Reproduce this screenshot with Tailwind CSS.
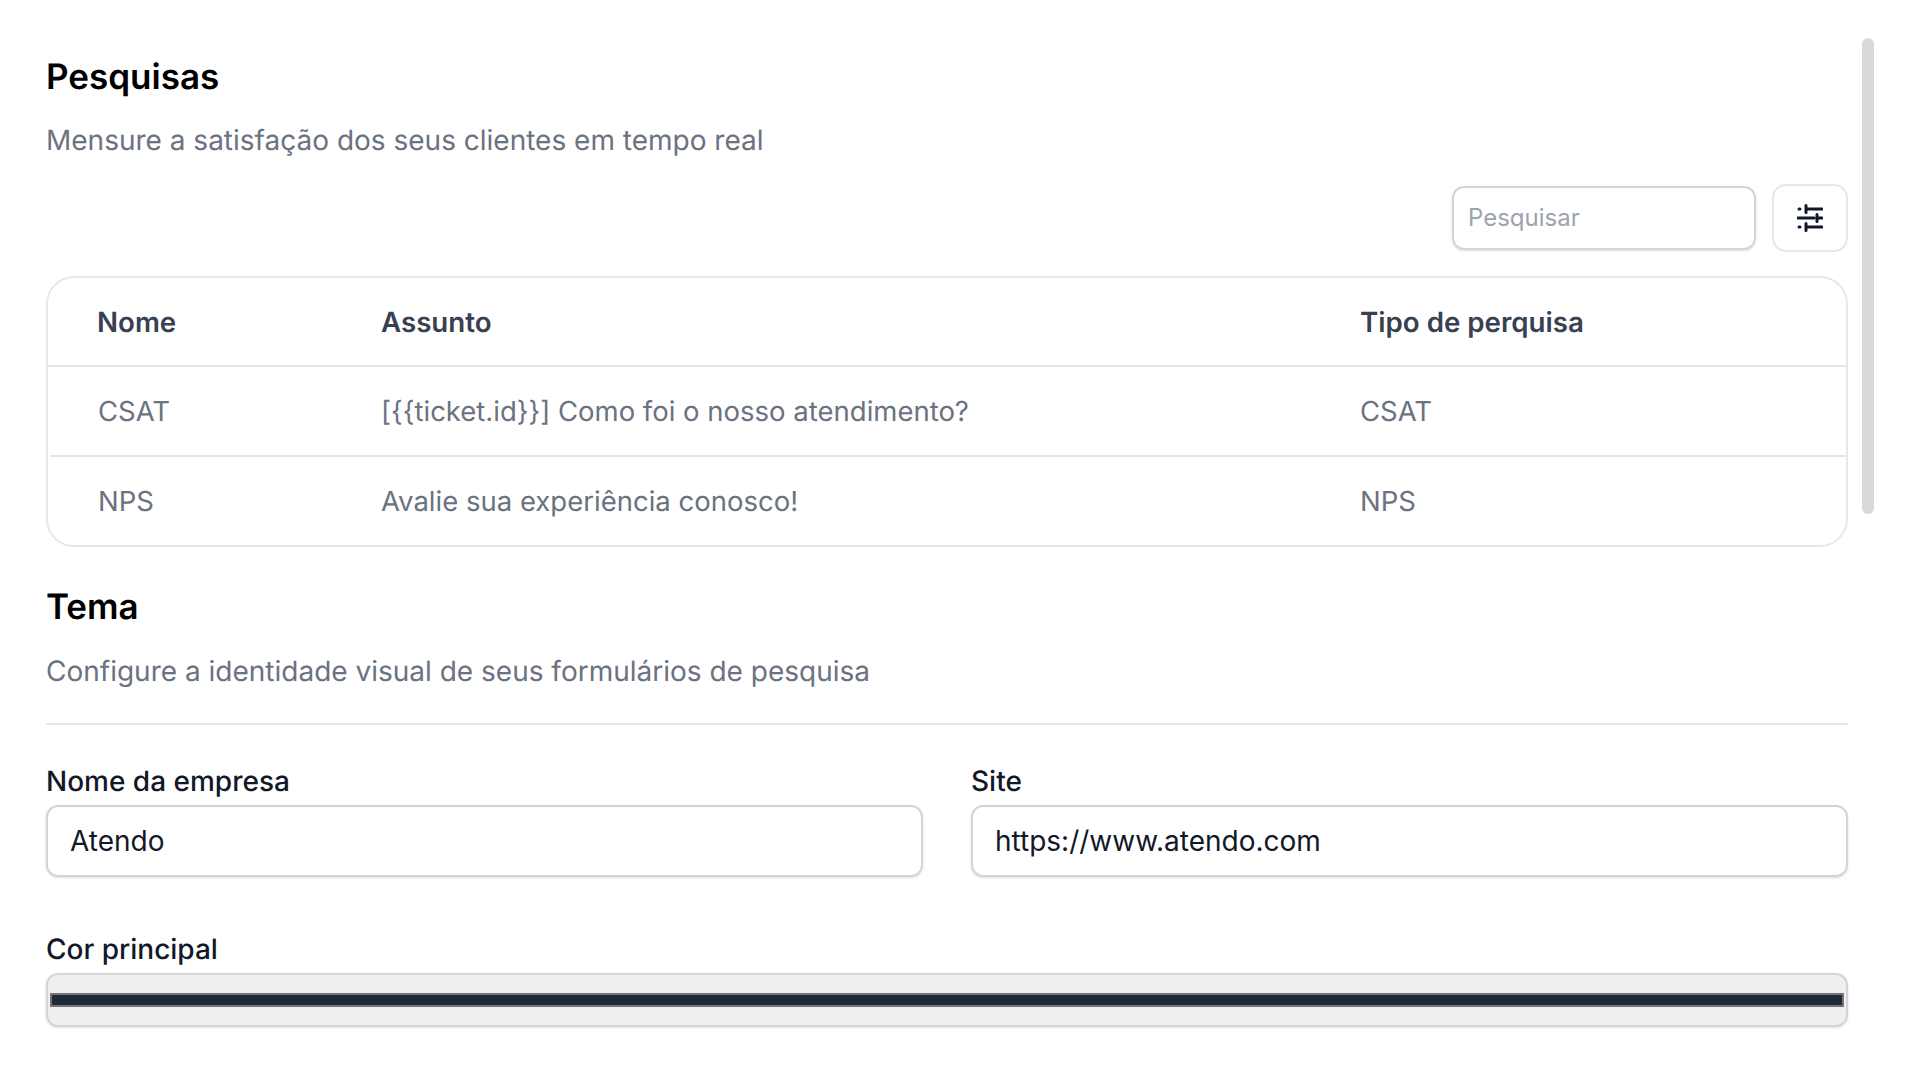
<!DOCTYPE html>
<html lang="pt-BR">
<head>
    <meta charset="UTF-8">
    <title>Pesquisas</title>
    <script src="https://cdn.jsdelivr.net/npm/@tailwindcss/browser@4"></script>
</head>
<body class="bg-white h-screen overflow-hidden relative antialiased [text-rendering:geometricPrecision] font-['Inter',sans-serif]">

    <!-- Scrollbar thumb -->
    <div class="absolute left-[1862px] top-[38px] w-3 h-[476px] bg-[#d9d9d9] rounded-full"></div>

    <main class="ml-[46px] w-[1802px] pt-[52px]">
        <!-- Pesquisas -->
        <h1 class="text-[35px] leading-[50px] font-semibold text-black">Pesquisas</h1>
        <p class="mt-[13px] text-[28px] leading-[50px] text-[#6b7280]">Mensure a satisfação dos seus clientes em tempo real</p>

        <div class="flex justify-end items-center gap-4 mt-[19px]">
            <input type="text" placeholder="Pesquisar" class="w-[304px] h-[64px] px-[14px] pb-[1px] text-[24px] border-2 border-[#d1d5db] rounded-[12px] shadow-sm placeholder:text-[#9ca3af] outline-none">
            <button class="w-[76px] h-[68px] flex items-center justify-center border-2 border-[#e5e7eb] rounded-[14px]">
                <svg width="26" height="28" viewBox="0 0 26 28" fill="none" stroke="#111827" stroke-width="3" stroke-linecap="round" stroke-linejoin="round">
                    <path d="M2 5h1M9 1.500v7M9 5h16"/>
                    <path d="M1 14h16M20 10.500v7M20 14h5"/>
                    <path d="M2 23h1M9 19.500v7M9 23h16"/>
                </svg>
            </button>
        </div>

        <!-- Tabela -->
        <div class="mt-6 h-[271px] border-2 border-[#e5e7eb] rounded-[28px] text-[27.5px]">
            <div class="grid grid-cols-[284px_979px_1fr] h-[89px] pt-[2px] items-center border-b-2 border-[#e5e7eb] text-[27.7px] font-semibold text-[#374151]">
                <div class="pl-[49px]">Nome</div>
                <div class="pl-[49px]">Assunto</div>
                <div class="pl-[49px]">Tipo de perquisa</div>
            </div>
            <div class="grid grid-cols-[282px_979px_1fr] ml-[2px] h-[90px] pt-[1px] items-center border-b-2 border-[#e5e7eb] text-[#6b7280]">
                <div class="pl-[48px]">CSAT</div>
                <div class="pl-[49px]">[{{ticket.id}}] Como foi o nosso atendimento?</div>
                <div class="pl-[49px]">CSAT</div>
            </div>
            <div class="grid grid-cols-[282px_979px_1fr] ml-[2px] h-[88px] pt-[1px] items-center text-[#6b7280]">
                <div class="pl-[48px]">NPS</div>
                <div class="pl-[49px]">Avalie sua experiência conosco!</div>
                <div class="pl-[49px]">NPS</div>
            </div>
        </div>

        <!-- Tema -->
        <h2 class="mt-[35px] text-[35px] leading-[50px] font-semibold text-black">Tema</h2>
        <p class="mt-[14px] text-[28px] leading-[50px] text-[#6b7280]">Configure a identidade visual de seus formulários de pesquisa</p>
        <hr class="mt-[27px] border-t-2 border-[#e5e7eb]">

        <div class="grid grid-cols-2 gap-x-[48px] mt-[32px]">
            <label class="block">
                <span class="block text-[28px] leading-[48px] font-medium text-[#111827]">Nome da empresa</span>
                <input type="text" value="Atendo" class="block w-full h-[72px] px-[22px] text-[28px] text-[#111827] border-2 border-[#d1d5db] rounded-[12px] shadow-sm outline-none">
            </label>
            <label class="block">
                <span class="block text-[28px] leading-[48px] font-medium text-[#111827]">Site</span>
                <input type="text" value="https://www.atendo.com" class="block w-full h-[72px] px-[22px] text-[28px] text-[#111827] border-2 border-[#d1d5db] rounded-[12px] shadow-sm outline-none">
            </label>
        </div>

        <label class="block mt-[48px]">
            <span class="block text-[28px] leading-[48px] font-medium text-[#111827]">Cor principal</span>
            <input type="color" value="#1f2937" class="block w-full h-[54px] px-[2px] py-[18px] bg-[#efefef] border-2 border-[#d1d5db] rounded-[12px] shadow-sm [&::-webkit-color-swatch-wrapper]:p-0 [&::-webkit-color-swatch]:border-2 [&::-webkit-color-swatch]:border-[#767676] [&::-webkit-color-swatch]:rounded-none">
        </label>
    </main>
</body>
</html>
